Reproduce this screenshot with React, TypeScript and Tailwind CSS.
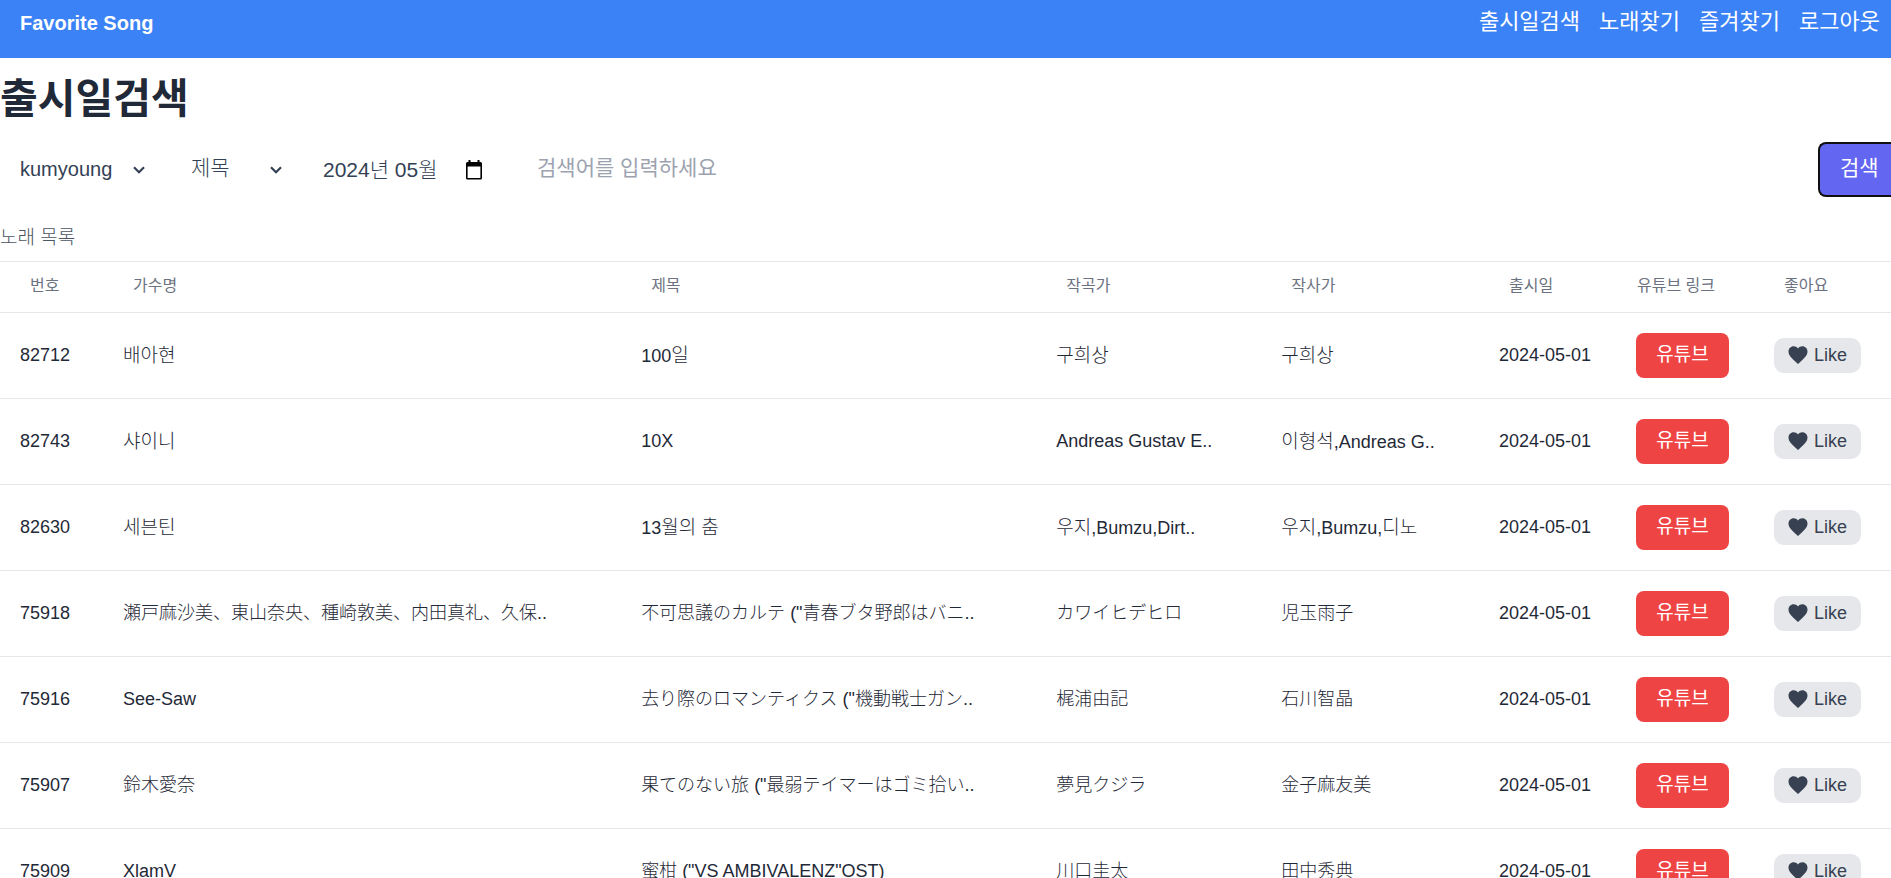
import { Fragment } from "react";

type Song = {
  no: string;
  singer: string;
  title: string;
  composer: string;
  lyricist: string;
  date: string;
};

const songs: Song[] = [
  { no: "82712", singer: "배아현", title: "100일", composer: "구희상", lyricist: "구희상", date: "2024-05-01" },
  { no: "82743", singer: "샤이니", title: "10X", composer: "Andreas Gustav E..", lyricist: "이형석,Andreas G..", date: "2024-05-01" },
  { no: "82630", singer: "세븐틴", title: "13월의 춤", composer: "우지,Bumzu,Dirt..", lyricist: "우지,Bumzu,디노", date: "2024-05-01" },
  { no: "75918", singer: "瀬戸麻沙美、東山奈央、種崎敦美、内田真礼、久保..", title: "不可思議のカルテ (\"青春ブタ野郎はバニ..", composer: "カワイヒデヒロ", lyricist: "児玉雨子", date: "2024-05-01" },
  { no: "75916", singer: "See-Saw", title: "去り際のロマンティクス (\"機動戦士ガン..", composer: "梶浦由記", lyricist: "石川智晶", date: "2024-05-01" },
  { no: "75907", singer: "鈴木愛奈", title: "果てのない旅 (\"最弱テイマーはゴミ拾い..", composer: "夢見クジラ", lyricist: "金子麻友美", date: "2024-05-01" },
  { no: "75909", singer: "XlamV", title: "蜜柑 (\"VS AMBIVALENZ\"OST)", composer: "川口圭太", lyricist: "田中秀典", date: "2024-05-01" },
];

const menu = ["출시일검색", "노래찾기", "즐겨찾기", "로그아웃"];

const columns = [
  { label: "번호", width: "w-[103px]" },
  { label: "가수명", width: "w-[27.4%]" },
  { label: "제목", width: "w-[21.95%]" },
  { label: "작곡가", width: "w-[11.9%]" },
  { label: "작사가", width: "" },
  { label: "출시일", width: "w-[128px]" },
  { label: "유튜브 링크", width: "w-[147px]" },
  { label: "좋아요", width: "w-[137px]" },
];

/* Hangul runs are set one step larger so they keep pace with the kanji and Latin text. */
function Mixed({ text }: { text: string }) {
  const parts = text.split(/([\uac00-\ud7a3]+)/);
  return (
    <>
      {parts.map((part, i) =>
        i % 2 === 1 ? (
          <span key={i} lang="ko" className="text-[19px]">
            {part}
          </span>
        ) : (
          <Fragment key={i}>{part}</Fragment>
        ),
      )}
    </>
  );
}

function Chevron() {
  return (
    <svg viewBox="0 0 12 8" className="pointer-events-none absolute top-6 right-6 h-2 w-3" fill="none" stroke="currentColor" strokeWidth="2.2" aria-hidden="true">
      <path d="M1 1.2 6 6.2 11 1.2" />
    </svg>
  );
}

function Heart() {
  return (
    <svg viewBox="0 0 20 18" className="mb-0.5 h-[18px] w-5" fill="currentColor" aria-hidden="true">
      <path d="M10 18 8.6 16.7C3.4 12.1.5 9.3.5 5.6.5 2.6 2.8.3 5.6.3 7.3.3 9 1.1 10 2.4 11 1.1 12.7.3 14.4.3 17.2.3 19.5 2.6 19.5 5.6 19.5 9.3 16.6 12.1 11.4 16.7Z" />
    </svg>
  );
}

export default function App() {
  return (
    <div className="min-h-screen overflow-x-hidden bg-white font-['Liberation_Sans','Noto_Sans_CJK_KR',sans-serif] text-[#1f2937]">
      <header className="flex h-[58px] items-start justify-between bg-[#3b82f6] pr-[11px] pl-5 text-white">
        <a href="#" className="pt-2 text-[20px] leading-[30px] font-bold">
          Favorite Song
        </a>
        <nav className="flex gap-[19px] pt-[7px]">
          {menu.map((item) => (
            <a key={item} href="#" className="text-[22px] leading-[30px]">
              {item}
            </a>
          ))}
        </nav>
      </header>

      <main>
        <h1 className="pt-4 text-[41px] leading-[50px] font-bold">출시일검색</h1>

        <form className="mt-[18px] flex h-[55px] text-[#334155]" onSubmit={(e) => e.preventDefault()}>
          <div className="relative w-[169px]">
            <select aria-label="노래방" className="h-full w-full appearance-none bg-transparent pb-0.5 pl-5 text-[20px] outline-none">
              <option>kumyoung</option>
            </select>
            <Chevron />
          </div>
          <div className="relative w-[137px]">
            <select aria-label="검색 구분" className="h-full w-full appearance-none bg-transparent pb-1 pl-[22px] text-[21px] font-light outline-none">
              <option>제목</option>
            </select>
            <Chevron />
          </div>
          <div className="flex w-[211px] items-center pl-[17px]">
            <input aria-label="출시월" defaultValue="2024년 05월" className="h-full w-[142px] bg-transparent pb-1 text-[21px] font-light outline-none" />
            <button type="button" aria-label="달력 열기" className="text-black">
              <svg viewBox="0 0 18 20" className="h-5 w-[18px]" fill="currentColor" aria-hidden="true">
                <path fillRule="evenodd" d="M3.5 0h2v2h7V0h2v2h1A1.5 1.5 0 0 1 17 3.500V18a1.5 1.5 0 0 1-1.500 1.500h-13A1.5 1.5 0 0 1 1 18V3.500A1.5 1.5 0 0 1 2.500 2h1ZM2.600 6.500v11.400h12.800V6.500Z" />
              </svg>
            </button>
          </div>
          <input aria-label="검색어" placeholder="검색어를 입력하세요" className="min-w-0 flex-1 bg-transparent px-5 pb-1 text-[21px] outline-none placeholder:text-[#9ca3af]" />
          <button type="submit" className="w-[73px] rounded-l-lg border-2 border-r-0 border-[#101010] bg-[#6366f1] pr-[11px] pb-1 pl-5 text-left text-[21px] whitespace-nowrap text-white">
            검색
          </button>
        </form>

        <table className="mt-6 w-full table-fixed border-collapse text-left font-light">
          <caption className="h-10 pt-0.5 text-left text-[19px] leading-[30px] text-[#4b5563]">노래 목록</caption>
          <colgroup>
            {columns.map((c) => (
              <col key={c.label} className={c.width} />
            ))}
          </colgroup>
          <thead>
            <tr className="h-[51px] border-y border-[#e5e7eb]">
              {columns.map((c) => (
                <th key={c.label} scope="col" className="pb-0.5 pl-[30px] text-[16px] font-normal whitespace-nowrap text-[#6b7280]">
                  {c.label}
                </th>
              ))}
            </tr>
          </thead>
          <tbody>
            {songs.map((s) => (
              <tr key={s.no} className="h-[86px] border-b border-[#e5e7eb] text-[18px] leading-[25px] whitespace-nowrap">
                <td className="pl-5">{s.no}</td>
                <td className="pl-5"><Mixed text={s.singer} /></td>
                <td className="pl-5"><Mixed text={s.title} /></td>
                <td className="pl-5"><Mixed text={s.composer} /></td>
                <td className="pl-5"><Mixed text={s.lyricist} /></td>
                <td className="pl-5">{s.date}</td>
                <td className="pl-[29px]">
                  <a href="#" className="inline-flex h-[45px] w-[93px] items-center justify-center rounded-lg bg-[#ef4444] pb-0.5 align-middle text-[19px] font-normal text-white">
                    유튜브
                  </a>
                </td>
                <td className="pl-5">
                  <button type="button" className="flex h-[35px] w-[87px] items-center justify-center gap-1.5 rounded-[10px] bg-[#e5e7eb] text-[#374151]">
                    <Heart />
                    Like
                  </button>
                </td>
              </tr>
            ))}
          </tbody>
        </table>
      </main>
    </div>
  );
}
